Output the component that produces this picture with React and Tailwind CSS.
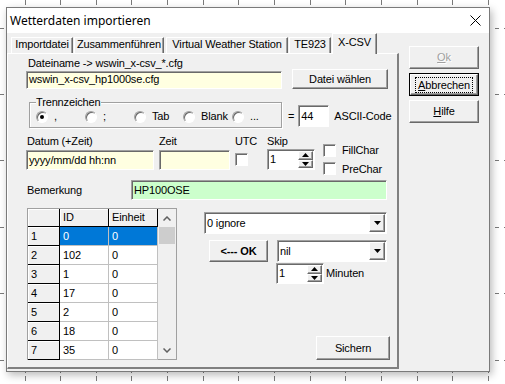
import React from "react";

// classic 3D borders
const raised =
  "bg-[#f0f0f0] border border-t-white border-l-white border-r-[#696969] border-b-[#696969] shadow-[inset_-1px_-1px_0_#a0a0a0]";
const sunken =
  "border border-t-[#a0a0a0] border-l-[#a0a0a0] border-r-white border-b-white shadow-[inset_1px_1px_0_#696969]";

const vTicks = [25, 60, 96, 131, 167, 203, 238, 274, 310, 345, 381, 417, 452, 488];
const hTicks = [28, 94, 160, 227, 293, 360];

const rows = [
  [1, "0", "0"],
  [2, "102", "0"],
  [3, "1", "0"],
  [4, "17", "0"],
  [5, "2", "0"],
  [6, "18", "0"],
  [7, "35", "0"],
];

const Tri = ({ up }) => (
  <svg width="7" height="4" viewBox="0 0 7 4">
    <polygon points={up ? "3.5,0 7,4 0,4" : "0,0 7,0 3.5,4"} fill="#000" />
  </svg>
);

const Combo = ({ value, className = "" }) => (
  <div className={`${sunken} bg-white flex h-[22px] ${className}`}>
    <span className="flex-1 pl-[2px] leading-[20px]">{value}</span>
    <div className={`${raised} w-[16px] m-[1px] flex items-center justify-center`}>
      <Tri />
    </div>
  </div>
);

const Spin = ({ value, className = "" }) => (
  <div className={`${sunken} bg-white flex h-[21px] w-[48px] ${className}`}>
    <span className="flex-1 pl-[2px] leading-[19px]">{value}</span>
    <div className="flex flex-col w-[15px] my-[1px] mr-[1px]">
      <div className={`${raised} flex-1 flex items-center justify-center`}>
        <Tri up />
      </div>
      <div className={`${raised} flex-1 flex items-center justify-center`}>
        <Tri />
      </div>
    </div>
  </div>
);

const Check = ({ className = "" }) => (
  <span className={`${sunken} bg-white block w-[13px] h-[13px] ${className}`} />
);

const Radio = ({ checked }) => (
  <span className="w-[12px] h-[12px] rounded-full bg-white border border-t-[#a0a0a0] border-l-[#a0a0a0] border-r-white border-b-white shadow-[inset_1px_1px_0_#696969] flex items-center justify-center shrink-0">
    {checked && <span className="w-[4px] h-[4px] rounded-full bg-black" />}
  </span>
);

const Tab = ({ label, className = "", active }) => (
  <div
    className={`bg-[#f0f0f0] border-t border-l border-t-white border-l-white border-r border-r-[#696969] shadow-[inset_-1px_0_0_#a0a0a0] text-center leading-[13px] ${
      active ? "h-[21px] pt-[2px] -mb-[1px] relative z-10" : "h-[16px]"
    } ${className}`}
  >
    {label}
  </div>
);

const Background = () => (
  <svg className="absolute inset-0" width="505" height="384">
    {vTicks.map((x) => (
      <line key={x} x1={x + 0.5} y1="0" x2={x + 0.5} y2="384" stroke="#7a7a7a" strokeDasharray="5 3" />
    ))}
    {hTicks.map((y) => (
      <line key={y} x1="0" y1={y + 0.5} x2="505" y2={y + 0.5} stroke="#7a7a7a" strokeDasharray="4 5" />
    ))}
  </svg>
);

const DataGrid = () => (
  <div className="ml-[1px] flex border border-[#a0a0a0] w-[150px] h-[152px] bg-[#f0f0f0]">
    <div className="flex flex-col">
      <div className="flex h-[18px]">
        <div className="w-[32px] border-r border-b border-black shadow-[inset_1px_1px_0_#fff]" />
        <div className="w-[49px] border-r border-b border-black shadow-[inset_1px_1px_0_#fff] pl-[3px] leading-[17px]">ID</div>
        <div className="w-[49px] border-r border-b border-black shadow-[inset_1px_1px_0_#fff] pl-[3px] leading-[17px]">Einheit</div>
      </div>
      {rows.map(([n, id, e], i) => (
        <div key={n} className="flex h-[19px]">
          <div className="w-[32px] border-r border-b border-black shadow-[inset_1px_1px_0_#fff] pl-[3px] leading-[18px]">{n}</div>
          <div
            className={`w-[49px] border-r border-b border-[#c0c0c0] pl-[3px] leading-[18px] ${
              i === 0 ? "bg-[#0078d7] text-white" : "bg-white"
            }`}
          >
            {id}
          </div>
          <div
            className={`w-[49px] border-r border-b border-[#c0c0c0] pl-[3px] leading-[18px] ${
              i === 0 ? "bg-[#0078d7] text-white" : "bg-white"
            }`}
          >
            {e}
          </div>
        </div>
      ))}
    </div>
    <div className="w-[18px] flex flex-col">
      <div className="h-[18px] flex items-center justify-center">
        <svg width="8" height="5" viewBox="0 0 8 5">
          <polyline points="0.5,4.5 4,1 7.5,4.5" fill="none" stroke="#606060" strokeWidth="1.5" />
        </svg>
      </div>
      <div className="h-[17px] mx-[1px] bg-[#cdcdcd]" />
      <div className="flex-1" />
      <div className="h-[18px] flex items-center justify-center">
        <svg width="8" height="5" viewBox="0 0 8 5">
          <polyline points="0.5,0.5 4,4 7.5,0.5" fill="none" stroke="#606060" strokeWidth="1.5" />
        </svg>
      </div>
    </div>
  </div>
);

export default function App() {
  return (
    <div className="relative w-[505px] h-[384px] bg-white overflow-hidden font-['Liberation_Sans',Arial,sans-serif] text-[11px] tracking-[-0.15px] text-black">
      <Background />
      <div className="relative ml-[6px] mt-[7px] w-[484px] h-[365px] border border-[#7a7a7a] bg-[#f0f0f0] flex flex-col shadow-[2px_3px_8px_rgba(0,0,0,0.28)]">
        {/* title bar */}
        <div className="h-[25px] bg-white flex items-center justify-between pl-[3px] pr-[8px]">
          <span className="font-['Noto_Sans',sans-serif] text-[12px] tracking-normal">Wetterdaten importieren</span>
          <svg width="11" height="11" viewBox="0 0 11 11">
            <path d="M0.5 0.5 L10.5 10.5 M10.5 0.5 L0.5 10.5" stroke="#000" strokeWidth="1" />
          </svg>
        </div>

        <div className="flex flex-1">
          {/* tabs + page */}
          <div className="flex flex-col">
            <div className="flex items-end h-[20px]">
              <Tab label="Importdatei" className="ml-[4px] w-[62px]" />
              <Tab label="Zusammenführen" className="ml-[1px] w-[90px]" />
              <Tab label="Virtual Weather Station" className="ml-[2px] w-[122px]" />
              <Tab label="TE923" className="ml-[1px] w-[42px]" />
              <Tab label="X-CSV" className="ml-[1px] w-[45px]" active />
            </div>
            <div className="w-[392px] h-[316px] border-t border-l border-t-white border-l-white border-r-2 border-b-2 border-r-[#808080] border-b-[#808080] pl-[18px] flex flex-col">
              <div className="mt-[3px] ml-[2px] h-[12px] leading-[12px]">Dateiname -&gt; wswin_x-csv_*.cfg</div>

              <div className="flex items-start">
                <div className={`${sunken} mt-[2px] w-[256px] h-[18px] bg-[#ffffe1] pl-[2px] leading-[15px]`}>
                  wswin_x-csv_hp1000se.cfg
                </div>
                <div className={`${raised} ml-[10px] w-[96px] h-[20px] flex items-center justify-center`}>Datei wählen</div>
              </div>

              <div className="flex items-start mt-[13px]">
                <div className="relative ml-[3px] w-[253px] h-[26px] border border-[#a0a0a0] shadow-[inset_1px_1px_0_#fff,1px_1px_0_#fff] flex items-center pl-[6px] pt-[3px]">
                  <span className="absolute left-[6px] -top-[7px] bg-[#f0f0f0] pr-[1px] leading-[12px]">Trennzeichen</span>
                  {[",", ";", "Tab", "Blank", "..."].map((s, i) => (
                    <div key={s} className={`flex items-center ${i < 4 ? "w-[49px]" : ""}`}>
                      <Radio checked={i === 0} />
                      <span className="ml-[6px]">{s}</span>
                    </div>
                  ))}
                </div>
                <div className="flex items-center mt-[3px] h-[22px]">
                  <span className="ml-[6px]">=</span>
                  <div className={`${sunken} ml-[4px] w-[31px] h-[22px] bg-white pl-[2px] leading-[20px]`}>44</div>
                  <span className="ml-[5px]">ASCII-Code</span>
                </div>
              </div>

              <div className="flex items-start mt-[7px]">
                <div className="w-[128px] flex flex-col">
                  <span className="pl-[1px] h-[13px] leading-[13px]">Datum (+Zeit)</span>
                  <div className={`${sunken} mt-[2px] h-[20px] bg-[#ffffe1] pl-[2px] leading-[18px]`}>yyyy/mm/dd hh:nn</div>
                </div>
                <div className="ml-[5px] w-[71px] flex flex-col">
                  <span className="h-[13px] leading-[13px]">Zeit</span>
                  <div className={`${sunken} mt-[2px] h-[20px] bg-[#ffffe1]`} />
                </div>
                <div className="ml-[5px] w-[32px] flex flex-col">
                  <span className="h-[13px] leading-[13px]">UTC</span>
                  <Check className="mt-[5px]" />
                </div>
                <div className="flex flex-col">
                  <span className="h-[13px] leading-[13px]">Skip</span>
                  <Spin value="1" className="mt-[1px]" />
                </div>
                <div className="ml-[8px] flex flex-col">
                  <div className="flex items-center mt-[7px]">
                    <Check />
                    <span className="ml-[6px]">FillChar</span>
                  </div>
                  <div className="flex items-center mt-[2px]">
                    <Check />
                    <span className="ml-[6px]">PreChar</span>
                  </div>
                </div>
              </div>

              <div className="flex items-center mt-[3px] h-[20px]">
                <span className="w-[105px] pl-[1px]">Bemerkung</span>
                <div className={`${sunken} w-[256px] h-[20px] bg-[#ccffcc] pl-[2px] leading-[18px]`}>HP100OSE</div>
              </div>

              <div className="flex items-start mt-[8px]">
                <DataGrid />
                <div className="ml-[27px] flex flex-col">
                  <Combo value="0 ignore" className="mt-[4px] w-[183px]" />
                  <div className="flex mt-[6px]">
                    <div className={`${raised} ml-[5px] w-[59px] h-[22px] flex items-center justify-center font-bold`}>&lt;--- OK</div>
                    <Combo value="nil" className="ml-[9px] w-[110px]" />
                  </div>
                  <div className="flex items-center mt-[1px] ml-[72px]">
                    <Spin value="1" />
                    <span className="ml-[2px]">Minuten</span>
                  </div>
                  <div className={`${raised} mt-[52px] ml-[112px] w-[74px] h-[24px] flex items-center justify-center`}>Sichern</div>
                </div>
              </div>
            </div>
          </div>

          {/* dialog buttons */}
          <div className="ml-[10px] mt-[13px] flex flex-col gap-[4px]">
            <div className={`${raised} w-[70px] h-[23px] flex items-center justify-center text-[#a0a0a0] [text-shadow:1px_1px_0_#fff]`}>
              <span><span className="underline">O</span>k</span>
            </div>
            <div className="w-[70px] h-[23px] border border-black flex">
              <div className={`${raised} flex-1 flex items-center justify-center`}>
                <span className="outline outline-1 outline-dotted outline-black px-[2px] leading-[14px]">
                  <span className="underline">A</span>bbrechen
                </span>
              </div>
            </div>
            <div className={`${raised} w-[70px] h-[23px] flex items-center justify-center`}>
              <span><span className="underline">H</span>ilfe</span>
            </div>
          </div>
        </div>
      </div>
    </div>
  );
}
